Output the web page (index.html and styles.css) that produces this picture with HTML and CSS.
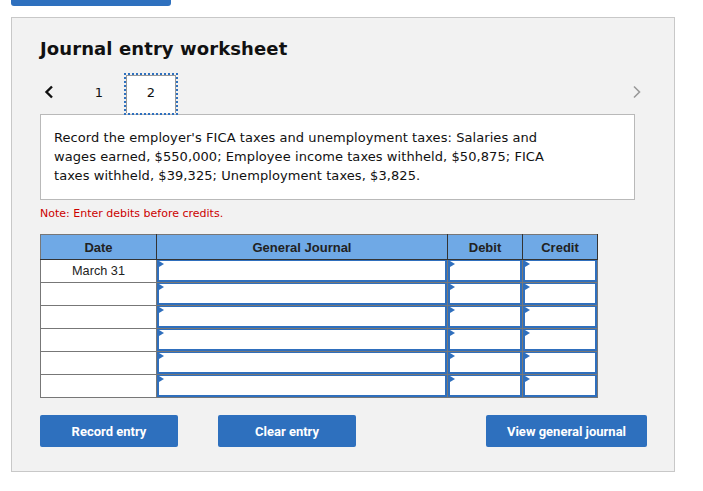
FILE: index.html
```html
<!DOCTYPE html>
<html>
<head>
<meta charset="utf-8">
<link rel="stylesheet" href="styles.css">
</head>
<body>
<div class="topbar"></div>
<div class="panel">
  <h1 class="title">Journal entry worksheet</h1>
  <div class="nav">
    <div class="prev">
      <svg width="10" height="14" viewBox="0 0 10 14"><polyline points="8,1.5 2.5,7 8,12.5" fill="none" stroke="#111" stroke-width="2.4"/></svg>
    </div>
    <div class="tab">1</div>
    <div class="tab active">2</div>
    <div class="next">
      <svg width="10" height="14" viewBox="0 0 10 14"><polyline points="2,1.5 7.5,7 2,12.5" fill="none" stroke="#9a9a9a" stroke-width="1.6"/></svg>
    </div>
  </div>
  <div class="question"><p class="qtext">Record the employer's FICA taxes and unemployment taxes: Salaries and wages earned, $550,000; Employee income taxes withheld, $50,875; FICA taxes withheld, $39,325; Unemployment taxes, $3,825.</p></div>
  <div class="note">Note: Enter debits before credits.</div>
  <table class="journal">
    <colgroup><col class="c-date"><col class="c-acct"><col class="c-num"><col class="c-num"></colgroup>
    <thead>
      <tr><th>Date</th><th>General Journal</th><th>Debit</th><th>Credit</th></tr>
    </thead>
    <tbody>
      <tr><td class="date">March 31</td><td><div class="inp"></div></td><td><div class="inp"></div></td><td><div class="inp"></div></td></tr>
      <tr><td class="date"></td><td><div class="inp"></div></td><td><div class="inp"></div></td><td><div class="inp"></div></td></tr>
      <tr><td class="date"></td><td><div class="inp"></div></td><td><div class="inp"></div></td><td><div class="inp"></div></td></tr>
      <tr><td class="date"></td><td><div class="inp"></div></td><td><div class="inp"></div></td><td><div class="inp"></div></td></tr>
      <tr><td class="date"></td><td><div class="inp"></div></td><td><div class="inp"></div></td><td><div class="inp"></div></td></tr>
      <tr><td class="date"></td><td><div class="inp"></div></td><td><div class="inp"></div></td><td><div class="inp"></div></td></tr>
    </tbody>
  </table>
  <div class="actions">
    <button class="btn">Record entry</button>
    <button class="btn">Clear entry</button>
    <button class="btn wide">View general journal</button>
  </div>
</div>
</body>
</html>
```

FILE: styles.css
```css
html, body {
  margin: 0;
  padding: 0;
  background: #ffffff;
}
body {
  font-family: "DejaVu Sans", Verdana, sans-serif;
  color: #111;
}
.topbar {
  margin-left: 11px;
  width: 160px;
  height: 6px;
  background: #2e70be;
  border-radius: 0 0 3px 3px;
}
.panel {
  box-sizing: border-box;
  margin: 11px 0 0 11px;
  width: 664px;
  height: 455px;
  background: #f2f2f2;
  border: 1px solid #c8c8c8;
  padding: 20px 27px 0 28px;
}
.title {
  margin: 0;
  font-size: 18px;
  line-height: 22px;
  font-weight: bold;
  letter-spacing: 0.1px;
  color: #111;
}
.nav {
  display: flex;
  align-items: flex-start;
  margin-top: 15px;
  height: 38px;
  margin-bottom: 1px;
}
.prev {
  width: 34px;
  padding: 9px 0 0 4px;
  box-sizing: border-box;
  height: 38px;
}
.tab {
  box-sizing: border-box;
  width: 50px;
  height: 38px;
  margin-right: 2px;
  text-align: center;
  font-size: 13px;
  line-height: 16px;
  padding-top: 9px;
  color: #111;
  border: 1px solid transparent;
  border-bottom: 0;
}
.tab.active {
  background: #fff;
  border-color: #9a9a9a;
  outline: 2px dotted #2e70be;
  position: relative;
  z-index: 2;
}
.next {
  margin-left: auto;
  margin-right: 5px;
  padding-top: 9px;
}
.question {
  position: relative;
  z-index: 1;
  box-sizing: border-box;
  width: 595px;
  background: #fff;
  border: 1px solid #b9b9b9;
  padding: 13px 13px 14px 13px;
}
.qtext {
  margin: 0;
  max-width: 520px;
  font-size: 13px;
  line-height: 19px;
  letter-spacing: 0.07px;
  color: #111;
}
.note {
  margin-top: 7px;
  font-size: 11px;
  line-height: 14px;
  color: #cc0000;
}
.journal {
  margin-top: 13px;
  border-collapse: collapse;
  table-layout: fixed;
  width: 558px;
  font-family: "Liberation Sans", Arial, sans-serif;
  font-size: 13px;
  border: 1px solid #777;
}
.c-date { width: 116px; }
.c-acct { width: 291px; }
.c-num { width: 75px; }
.journal th {
  background: #6fa9e6;
  color: #222;
  font-weight: bold;
  height: 24px;
  padding: 0;
  border: 1px solid #333;
  border-top-color: #777;
}
.journal th:first-child { border-left-color: #777; }
.journal td {
  height: 22px;
  padding: 0;
  border: 1px solid #777;
  background: #fff;
  vertical-align: top;
}
.journal td.date {
  text-align: center;
  vertical-align: middle;
  color: #222;
  font-size: 12.7px;
}
.inp {
  position: relative;
  box-sizing: border-box;
  height: 22px;
  border: 2px solid #2f6fbd;
  border-top-width: 1px;
  background: #fff;
}
.inp::before {
  content: "";
  position: absolute;
  left: 0;
  top: 0;
  border-left: 5px solid #2f6fbd;
  border-top: 3px solid transparent;
  border-bottom: 3px solid transparent;
}
.actions {
  display: flex;
  margin-top: 17px;
}
.btn {
  box-sizing: border-box;
  width: 138px;
  height: 32px;
  margin-right: 40px;
  border: 0;
  border-radius: 2px;
  background: #2e70be;
  color: #fff;
  font-family: Roboto, "Liberation Sans", sans-serif;
  font-weight: bold;
  font-size: 13px;
  padding: 0;
}
.btn.wide {
  width: 161px;
  margin-left: auto;
  margin-right: 0;
}
```
